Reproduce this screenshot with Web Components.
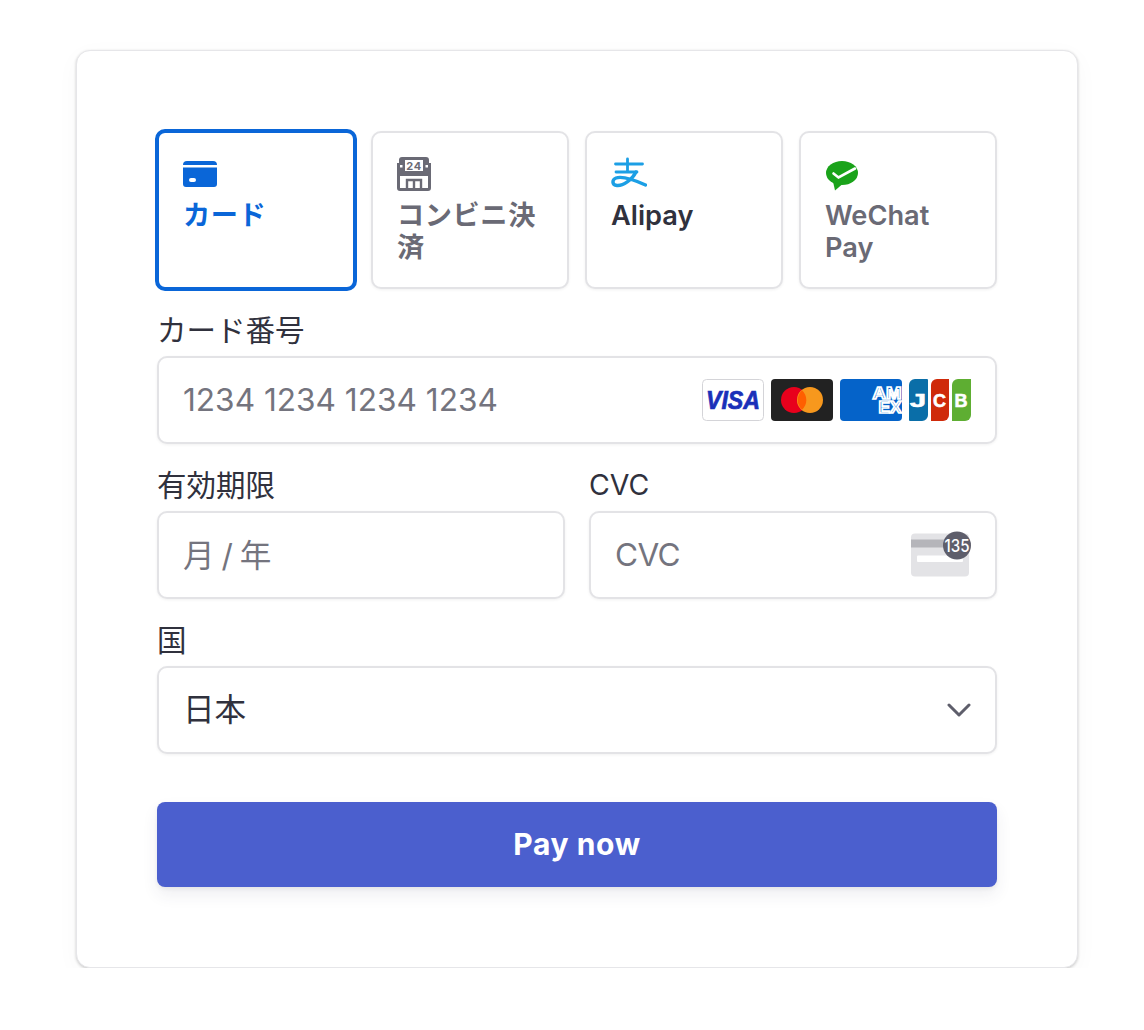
<!DOCTYPE html>
<html lang="ja">
<head>
<meta charset="utf-8">
<title>Payment</title>
<style>
    html, body { margin: 0; background: #fff; }
    body {
        font-family: Inter, "Noto Sans CJK JP", sans-serif;
        color: #30313d;
    }
</style>
</head>
<body>
<pay-page>
    <pay-tabs>
        <pay-tab selected label="カード" style="--label-spacing:0.600px">
            <svg slot="icon" width="34" height="34" viewBox="0 0 34 34" fill="#0a66d8">
                <path d="M4 4h26a4 4 0 0 1 4 4H0a4 4 0 0 1 4-4z"/>
                <path fill-rule="evenodd" d="M0 10.500h34V27a3 3 0 0 1-3 3H3a3 3 0 0 1-3-3zM8 21a2 2 0 0 0 0 4h3a2 2 0 0 0 0-4z"/>
            </svg>
        </pay-tab>
        <pay-tab label="コンビニ決済" style="--label-spacing:0.600px">
            <svg slot="icon" width="34" height="34" viewBox="0 0 34 34">
                <path fill="#6a6a75" d="M5 0h24a3 3 0 0 1 3 3v3h2v25a3 3 0 0 1-3 3H3a3 3 0 0 1-3-3V6h2V3a3 3 0 0 1 3-3z"/>
                <rect x="8" y="3" width="18" height="11" fill="#fff"/>
                <rect x="3" y="8" width="2.500" height="2.500" fill="#fff"/>
                <rect x="28.500" y="8" width="2.500" height="2.500" fill="#fff"/>
                <rect x="3" y="19" width="28" height="12" fill="#fff"/>
                <path fill="none" stroke="#6a6a75" stroke-width="2.400" d="M10 31V23h14v8M17 23v8"/>
                <text x="17" y="12.500" text-anchor="middle" font-family="Inter, sans-serif" font-weight="700" font-size="11" fill="#6a6a75">24</text>
            </svg>
        </pay-tab>
        <pay-tab label="Alipay" dark>
            <svg slot="icon" width="36" height="34" viewBox="0 0 36 34" fill="none" stroke="#1c9fe5" stroke-linecap="round">
                <path stroke-width="2.800" d="M4.500 7h27M16.500 2v12M5 15h21"/>
                <path stroke-width="3.400" d="M25 15C21 23 12 29 6 28.500 0.500 28 1 22.500 5 21 11 19 20 21.500 34.500 28"/>
            </svg>
        </pay-tab>
        <pay-tab label="WeChat Pay">
            <svg slot="icon" width="34" height="34" viewBox="0 0 34 34">
                <ellipse cx="17" cy="16" rx="16" ry="12" fill="#1aa31a"/>
                <path fill="#1aa31a" d="M8 24.500l2 9 7-6z"/>
                <path fill="none" stroke="#fff" stroke-width="2.600" stroke-linecap="round" d="M8.500 16.500l5 4L30 11.500"/>
            </svg>
        </pay-tab>
    </pay-tabs>

    <pay-field label="カード番号">
        <pay-input placeholder="1234 1234 1234 1234">
            <card-brands slot="end"></card-brands>
        </pay-input>
    </pay-field>

    <div style="display:grid;grid-template-columns:1fr 1fr;gap:24px">
        <pay-field label="有効期限">
            <pay-input placeholder="月 / 年" style="--text-word-spacing:-2px;--text-lift:3px"></pay-input>
        </pay-field>
        <pay-field label="CVC" style="--label-size:28.500px">
            <pay-input placeholder="CVC" style="--text-spacing:-0.600px">
                <svg slot="end" width="60" height="46" viewBox="0 0 60 46" overflow="visible" style="display:block">
                    <rect x="0" y="1.500" width="58" height="43" rx="4" fill="#e3e3e6"/>
                    <rect x="0" y="7.500" width="58" height="8" fill="#b5b5ba"/>
                    <rect x="6" y="23.500" width="46" height="6.500" rx="1" fill="#fff"/>
                    <circle cx="46" cy="13.500" r="14" fill="#5e5e6b"/>
                    <text x="46" y="19.500" text-anchor="middle" font-family="Inter, sans-serif" font-weight="500" font-size="17" textLength="25" lengthAdjust="spacingAndGlyphs" fill="#fff">135</text>
                </svg>
            </pay-input>
        </pay-field>
    </div>

    <pay-field label="国">
        <pay-input value="日本" style="--text-lift:6px">
            <svg slot="end" width="24" height="14" viewBox="0 0 24 14" fill="none" stroke="#5e5e6b" stroke-width="3" stroke-linecap="round" stroke-linejoin="round" style="display:block">
                <path d="M2 2l10 10L22 2"/>
            </svg>
        </pay-input>
    </pay-field>

    <pay-button>Pay now</pay-button>
</pay-page>

<script>
const payPageTemplate = document.createElement('template');
payPageTemplate.innerHTML = `
    <style>
        :host {
            display: block;
            padding: 50px 66px 0 76px;
        }
        .card {
            box-sizing: border-box;
            width: 1002px;
            height: 918px;
            padding: 80px 80px 0;
            background: #fff;
            border: 1px solid #e6e6e9;
            border-radius: 14px;
            box-shadow: 0 1px 3px rgba(0, 0, 0, 0.2), 0 6px 24px rgba(0, 0, 0, 0.03);
        }
    </style>
    <div class="card"><slot></slot></div>
`;

class PayPage extends HTMLElement {
    constructor() {
        super();
        this.attachShadow({ mode: 'open' });
        this.shadowRoot.appendChild(payPageTemplate.content.cloneNode(true));
    }
}

class PayTabs extends HTMLElement {
    constructor() {
        super();
        this.attachShadow({ mode: 'open' });
        this.shadowRoot.innerHTML = `
            <style>
                :host {
                    display: grid;
                    grid-template-columns: repeat(4, 198px);
                    column-gap: 16px;
                    margin-bottom: 25.500px;
                }
            </style>
            <slot></slot>
        `;
    }
}

class PayTab extends HTMLElement {
    constructor() {
        super();
        this.attachShadow({ mode: 'open' });
        this.shadowRoot.innerHTML = `
            <style>
                :host {
                    display: block;
                    box-sizing: border-box;
                    height: 158px;
                    padding: 24px 24px 0;
                    border: 2px solid #e3e3e6;
                    border-radius: 10px;
                    background: #fff;
                    color: #6a6a75;
                    font-size: 27.200px;
                    font-weight: 600;
                    letter-spacing: var(--label-spacing, 0);
                    line-height: 32px;
                    box-shadow: 0 1px 3px rgba(0, 0, 0, 0.06);
                }
                :host([selected]) {
                    border: 4px solid #0a66d8;
                    margin: -2px;
                    height: 162px;
                    color: #0a66d8;
                    box-shadow: none;
                }
                :host([dark]) { color: #30313d; }
                .icon { height: 34px; margin-bottom: 9px; }
                ::slotted(svg) { display: block; }
            </style>
            <div class="icon"><slot name="icon"></slot></div>
            <div class="label"></div>
        `;
    }

    connectedCallback() {
        this.shadowRoot.querySelector('.label').textContent = this.getAttribute('label');
    }
}

class PayField extends HTMLElement {
    constructor() {
        super();
        this.attachShadow({ mode: 'open' });
        this.shadowRoot.innerHTML = `
            <style>
                :host { display: block; margin-bottom: 26px; }
                label {
                    display: block;
                    font-size: var(--label-size, 29.500px);
                    line-height: 30px;
                    margin-bottom: 11px;
                    color: #30313d;
                }
            </style>
            <label></label>
            <slot></slot>
        `;
    }

    connectedCallback() {
        this.shadowRoot.querySelector('label').textContent = this.getAttribute('label');
    }
}

class PayInput extends HTMLElement {
    constructor() {
        super();
        this.attachShadow({ mode: 'open' });
        this.shadowRoot.innerHTML = `
            <style>
                :host {
                    display: flex;
                    align-items: center;
                    justify-content: space-between;
                    box-sizing: border-box;
                    height: 88px;
                    padding: 0 24px;
                    background: #fff;
                    border: 2px solid #e3e3e6;
                    border-radius: 10px;
                    box-shadow: 0 1px 3px rgba(0, 0, 0, 0.06);
                    font-size: 31.600px;
                }
                .text {
                    color: #30313d;
                    letter-spacing: var(--text-spacing, 0);
                    word-spacing: var(--text-word-spacing, 0);
                    padding-bottom: var(--text-lift, 0);
                }
                .text.placeholder { color: #74747e; }
            </style>
            <span class="text"></span>
            <slot name="end"></slot>
        `;
    }

    connectedCallback() {
        const text = this.shadowRoot.querySelector('.text');
        if (this.hasAttribute('placeholder')) {
            text.textContent = this.getAttribute('placeholder');
            text.classList.add('placeholder');
        } else {
            text.textContent = this.getAttribute('value');
        }
    }
}

class CardBrands extends HTMLElement {
    constructor() {
        super();
        this.attachShadow({ mode: 'open' });
        this.shadowRoot.innerHTML = `
            <style>
                :host { display: flex; gap: 7px; }
                svg { display: block; }
                text { font-family: "Liberation Sans", sans-serif; font-weight: 700; }
            </style>
            <svg width="62" height="42" viewBox="0 0 62 42">
                <rect x="0.500" y="0.500" width="61" height="41" rx="4" fill="#fff" stroke="#d4d4d8"/>
                <text x="31" y="30" text-anchor="middle" font-size="25" font-style="italic" fill="#1a30b9" stroke="#1a30b9" stroke-width="0.700" textLength="54" lengthAdjust="spacingAndGlyphs">VISA</text>
            </svg>
            <svg width="62" height="42" viewBox="0 0 62 42">
                <rect width="62" height="42" rx="4" fill="#222"/>
                <circle cx="23" cy="21" r="13" fill="#e8001c"/>
                <circle cx="39" cy="21" r="13" fill="#f7981d"/>
                <path d="M31 11.300a13 13 0 0 1 0 19.400a13 13 0 0 1 0-19.400z" fill="#ff5f00"/>
            </svg>
            <svg width="62" height="42" viewBox="0 0 62 42">
                <path d="M4 0h54a4 4 0 0 1 4 4v34a4 4 0 0 1-4 4H4a4 4 0 0 1-4-4V4a4 4 0 0 1 4-4z" fill="#0563c9"/>
                <text x="61.500" y="20" text-anchor="end" font-size="17" fill="#0563c9" stroke="#fff" stroke-width="1.700" textLength="29" lengthAdjust="spacingAndGlyphs">AM</text>
                <text x="61.500" y="34" text-anchor="end" font-size="17" fill="#0563c9" stroke="#fff" stroke-width="1.700" textLength="23" lengthAdjust="spacingAndGlyphs">EX</text>
            </svg>
            <svg width="62" height="42" viewBox="0 0 62 42">
                <path d="M6 0h12a1 1 0 0 1 1 1v35a6 6 0 0 1-6 6H1a1 1 0 0 1-1-1V6a6 6 0 0 1 6-6z" fill="#0a6ea8"/>
                <path d="M28 0h12v36a6 6 0 0 1-6 6H22V6a6 6 0 0 1 6-6z" fill="#cf2a0a"/>
                <path d="M49 0h13v36a6 6 0 0 1-6 6H43V6a6 6 0 0 1 6-6z" fill="#5eae32"/>
                <text font-size="18" fill="#fff" stroke="#fff" stroke-width="0.600" transform="translate(1 28) scale(1.600 1)">J</text>
                <text x="24" y="28" font-size="18" fill="#fff" stroke="#fff" stroke-width="0.600">C</text>
                <text x="45.500" y="28" font-size="18" fill="#fff" stroke="#fff" stroke-width="0.600">B</text>
            </svg>
        `;
    }
}

class PayButton extends HTMLElement {
    constructor() {
        super();
        this.attachShadow({ mode: 'open' });
        this.shadowRoot.innerHTML = `
            <style>
                :host {
                    display: block;
                    margin-top: 48px;
                }
                button {
                    display: block;
                    width: 100%;
                    height: 85px;
                    border: 0;
                    border-radius: 8px;
                    background: #4b5fce;
                    color: #fff;
                    font: 700 30px Inter, sans-serif;
                    letter-spacing: 0.600px;
                    padding: 0;
                    box-shadow: 0 8px 16px rgba(50, 50, 93, 0.08), 0 2px 4px rgba(0, 0, 0, 0.06);
                }
            </style>
            <button type="button"><slot></slot></button>
        `;
    }
}

customElements.define('pay-page', PayPage);
customElements.define('pay-tabs', PayTabs);
customElements.define('pay-tab', PayTab);
customElements.define('pay-field', PayField);
customElements.define('pay-input', PayInput);
customElements.define('card-brands', CardBrands);
customElements.define('pay-button', PayButton);
</script>
</body>
</html>
